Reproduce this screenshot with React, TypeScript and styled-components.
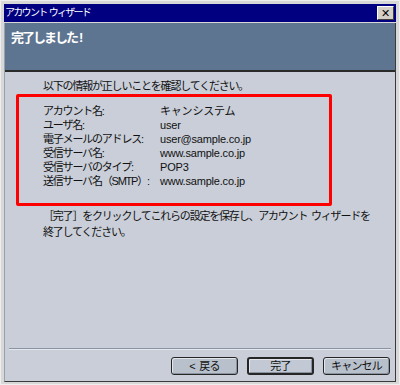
import styled, { createGlobalStyle } from "styled-components";

const GlobalStyle = createGlobalStyle`
  html, body {
    margin: 0;
    padding: 0;
    background: #d6d6d6;
  }
  * {
    box-sizing: border-box;
  }
`;

const font = `"Liberation Sans", "Noto Sans CJK JP", sans-serif`;

const Frame = styled.div`
  width: 400px;
  height: 385px;
  padding: 3px 3px 2px 3px;
  background: #d8d8d8;
  border: 1px solid #eeeeee;
  display: flex;
  flex-direction: column;
  font-family: ${font};
  color: #111;
`;

const TitleBar = styled.div`
  height: 18px;
  background: #000080;
  display: flex;
  align-items: center;
  justify-content: space-between;
  padding: 0 2px 0 1px;
`;

const TitleText = styled.span`
  color: #ffffff;
  font-size: 10px;
  letter-spacing: -1.7px;
  line-height: 14px;
  white-space: pre;
`;

const CloseButton = styled.button`
  width: 17px;
  height: 14px;
  padding: 0;
  background: #d4d0c8;
  border: 1px solid;
  border-color: #ffffff #404040 #404040 #ffffff;
  font-family: "DejaVu Sans", sans-serif;
  font-size: 11px;
  font-weight: bold;
  line-height: 11px;
  color: #000;
  display: flex;
  align-items: center;
  justify-content: center;
`;

const Window = styled.div`
  flex: 1;
  display: flex;
  flex-direction: column;
  margin-top: 1px;
  border-right: 1px solid #3a3a3a;
  border-bottom: 1px solid #3a3a3a;
  border-left: 1px solid #9aa0a8;
`;

const Header = styled.div`
  height: 49px;
  background: #5e7591;
  border-bottom: 2px solid #2a2a2a;
  padding: 6px 0 0 6px;
`;

const HeaderText = styled.h1`
  margin: 0;
  color: #ffffff;
  font-size: 13px;
  font-weight: bold;
  letter-spacing: -2px;
  line-height: 18px;
`;

const Bang = styled.span`
  margin-left: 2px;
`;

const Body = styled.div`
  flex: 1;
  background: #c9ced8;
  display: flex;
  flex-direction: column;
  padding-top: 7px;
`;

const Paragraph = styled.p<{ $lineHeight: number }>`
  margin: 0 0 0 38px;
  font-size: 11px;
  letter-spacing: -1.2px;
  line-height: ${(p) => p.$lineHeight}px;
  white-space: pre;
`;

const InfoBox = styled.div`
  width: 316px;
  margin: 1px 0 2px 11px;
  border: 3px solid #ff0000;
  border-radius: 2px;
  padding: 7px 0 15px 24px;
`;

const InfoRow = styled.div`
  display: grid;
  grid-template-columns: 117px 1fr;
  height: 14px;
  align-items: center;
  font-size: 11px;
  line-height: 14px;
`;

const Label = styled.span`
  letter-spacing: -1.2px;
  white-space: nowrap;
`;

const Value = styled.span`
  letter-spacing: -0.2px;
  white-space: nowrap;
`;

const Spacer = styled.div`
  flex: 1;
`;

const Separator = styled.div`
  margin: 0 4px;
  height: 2px;
  border-top: 1px solid #8b94a3;
  border-bottom: 1px solid #e4e7ec;
`;

const ButtonRow = styled.div`
  display: flex;
  justify-content: flex-end;
  gap: 9px;
  padding: 7px 5px 6px 0;
`;

const WizardButton = styled.button<{ $default?: boolean }>`
  width: 67px;
  height: 18px;
  padding: 0;
  background: ${(p) => (p.$default ? "#c2c9d4" : "#b8c0cc")};
  border: ${(p) => (p.$default ? "2px" : "1px")} solid #262626;
  border-radius: 3px;
  box-shadow: inset 1px 1px #e2e6ec, inset -1px -1px #8a93a0;
  font-family: ${font};
  font-size: 11px;
  letter-spacing: -0.8px;
  line-height: 14px;
  color: #111;
  white-space: pre;
`;

const rows: { label: string; value: string }[] = [
  { label: "アカウント名:", value: "キャンシステム" },
  { label: "ユーザ名:", value: "user" },
  { label: "電子メールのアドレス:", value: "user@sample.co.jp" },
  { label: "受信サーバ名:", value: "www.sample.co.jp" },
  { label: "受信サーバのタイプ:", value: "POP3" },
  { label: "送信サーバ名（SMTP）:", value: "www.sample.co.jp" },
];

const App = () => {
  return (
    <>
      <GlobalStyle />
      <Frame>
        <TitleBar>
          <TitleText>{"アカウント  ウィザード"}</TitleText>
          <CloseButton>✕</CloseButton>
        </TitleBar>
        <Window>
          <Header>
            <HeaderText>
              完了しました<Bang>!</Bang>
            </HeaderText>
          </Header>
          <Body>
            <Paragraph $lineHeight={14}>
              以下の情報が正しいことを確認してください。
            </Paragraph>
            <InfoBox>
              {rows.map((row) => (
                <InfoRow key={row.label}>
                  <Label>{row.label}</Label>
                  <Value>{row.value}</Value>
                </InfoRow>
              ))}
            </InfoBox>
            <Paragraph $lineHeight={16}>
              {"［完了］をクリックしてこれらの設定を保存し、アカウント  ウィザードを\n終了してください。"}
            </Paragraph>
            <Spacer />
            <Separator />
            <ButtonRow>
              <WizardButton>{"<  戻る"}</WizardButton>
              <WizardButton $default>完了</WizardButton>
              <WizardButton>キャンセル</WizardButton>
            </ButtonRow>
          </Body>
        </Window>
      </Frame>
    </>
  );
};

export default App;
